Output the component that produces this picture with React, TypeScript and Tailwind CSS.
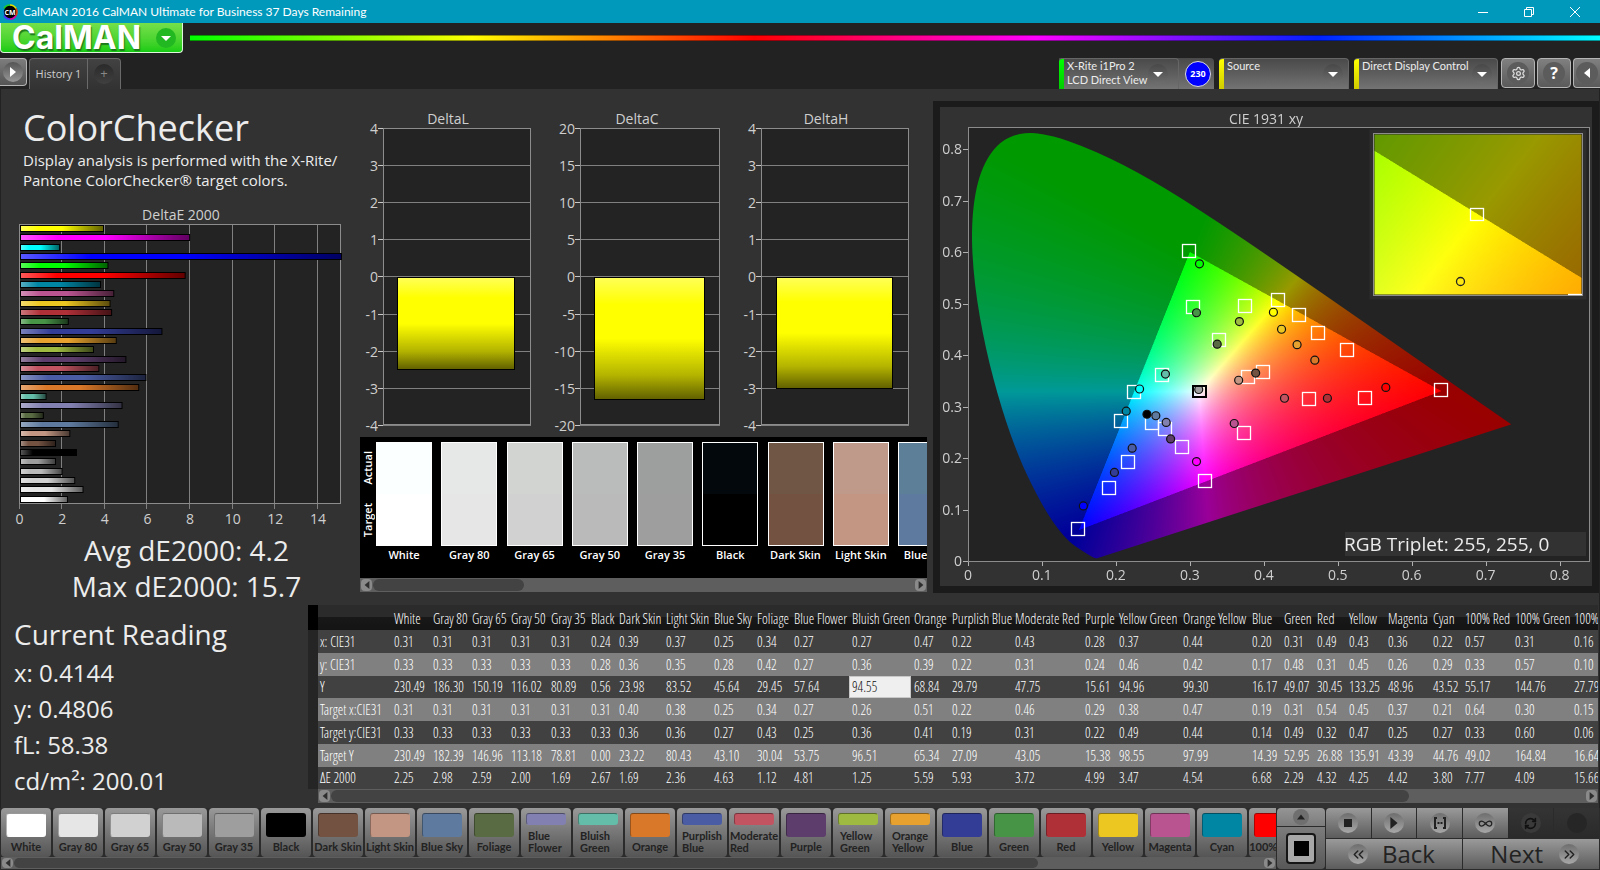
import { useEffect, useRef } from 'react';
import type { ReactNode } from 'react';
import { ChevronsLeft, ChevronsRight, Infinity as InfinityIcon, RefreshCw, Settings } from 'lucide-react';

type Patch = { name: string; color: string; actual?: string };

const PATCHES: Patch[] = [
  { name: 'White', color: '#ffffff', actual: '#fbffff' },
  { name: 'Gray 80', color: '#e6e6e6', actual: '#e5e8e7' },
  { name: 'Gray 65', color: '#d1d1d1', actual: '#d2d4d1' },
  { name: 'Gray 50', color: '#bababa', actual: '#babcbb' },
  { name: 'Gray 35', color: '#9e9e9e', actual: '#9d9f9e' },
  { name: 'Black', color: '#000000', actual: '#02080b' },
  { name: 'Dark Skin', color: '#735242', actual: '#705645' },
  { name: 'Light Skin', color: '#c29682', actual: '#bf9a8b' },
  { name: 'Blue Sky', color: '#5e7a9e', actual: '#5d7f98' },
  { name: 'Foliage', color: '#596b42' },
  { name: 'Blue Flower', color: '#8280b0' },
  { name: 'Bluish Green', color: '#63bda8' },
  { name: 'Orange', color: '#d97829' },
  { name: 'Purplish Blue', color: '#4a5ca3' },
  { name: 'Moderate Red', color: '#c25461' },
  { name: 'Purple', color: '#5c3d6b' },
  { name: 'Yellow Green', color: '#9eba40' },
  { name: 'Orange Yellow', color: '#e6a12e' },
  { name: 'Blue', color: '#333d96' },
  { name: 'Green', color: '#479447' },
  { name: 'Red', color: '#b03038' },
  { name: 'Yellow', color: '#edc721' },
  { name: 'Magenta', color: '#ba5491' },
  { name: 'Cyan', color: '#0085a3' },
  { name: '100% Red', color: '#ff0000' },
];

const DELTA_E: [string, number][] = [
  ['#ffff00', 3.94], ['#ff00ff', 7.98], ['#00ffff', 1.88], ['#0000ff', 15.66], ['#00ff00', 4.15],
  ['#ff0000', 7.77], ['#0085a3', 3.8], ['#ba5491', 4.42], ['#edc721', 4.25], ['#b03038', 4.32],
  ['#479447', 2.29], ['#333d96', 6.68], ['#e6a12e', 4.54], ['#9eba40', 3.47], ['#5c3d6b', 4.99],
  ['#c25461', 3.72], ['#4a5ca3', 5.93], ['#d97829', 5.59], ['#63bda8', 1.25], ['#8280b0', 4.81],
  ['#596b42', 1.12], ['#5e7a9e', 4.63], ['#c29682', 2.36], ['#735242', 1.69], ['#000000', 2.67],
  ['#9e9e9e', 1.69], ['#bababa', 2.0], ['#d1d1d1', 2.59], ['#e6e6e6', 2.98], ['#ffffff', 2.25],
];

const COLUMNS: [string, number][] = [
  ['White', 39], ['Gray 80', 39], ['Gray 65', 39], ['Gray 50', 40], ['Gray 35', 40], ['Black', 28],
  ['Dark Skin', 47], ['Light Skin', 48], ['Blue Sky', 43], ['Foliage', 37], ['Blue Flower', 58],
  ['Bluish Green', 62], ['Orange', 38], ['Purplish Blue', 63], ['Moderate Red', 70], ['Purple', 34],
  ['Yellow Green', 64], ['Orange Yellow', 69], ['Blue', 32], ['Green', 33], ['Red', 32], ['Yellow', 39],
  ['Magenta', 45], ['Cyan', 32], ['100% Red', 50], ['100% Green', 59], ['100% Blue', 60],
];

const ROWS: [string, string][] = [
  ['x: CIE31', '0.31 0.31 0.31 0.31 0.31 0.24 0.39 0.37 0.25 0.34 0.27 0.27 0.47 0.22 0.43 0.28 0.37 0.44 0.20 0.31 0.49 0.43 0.36 0.22 0.57 0.31 0.16'],
  ['y: CIE31', '0.33 0.33 0.33 0.33 0.33 0.28 0.36 0.35 0.28 0.42 0.27 0.36 0.39 0.22 0.31 0.24 0.46 0.42 0.17 0.48 0.31 0.45 0.26 0.29 0.33 0.57 0.10'],
  ['Y', '230.49 186.30 150.19 116.02 80.89 0.56 23.98 83.52 45.64 29.45 57.64 94.55 68.84 29.79 47.75 15.61 94.96 99.30 16.17 49.07 30.45 133.25 48.96 43.52 55.17 144.76 27.79'],
  ['Target x:CIE31', '0.31 0.31 0.31 0.31 0.31 0.31 0.40 0.38 0.25 0.34 0.27 0.26 0.51 0.22 0.46 0.29 0.38 0.47 0.19 0.31 0.54 0.45 0.37 0.21 0.64 0.30 0.15'],
  ['Target y:CIE31', '0.33 0.33 0.33 0.33 0.33 0.33 0.36 0.36 0.27 0.43 0.25 0.36 0.41 0.19 0.31 0.22 0.49 0.44 0.14 0.49 0.32 0.47 0.25 0.27 0.33 0.60 0.06'],
  ['Target Y', '230.49 182.39 146.96 113.18 78.81 0.00 23.22 80.43 43.10 30.04 53.75 96.51 65.34 27.09 43.05 15.38 98.55 97.99 14.39 52.95 26.88 135.91 43.39 44.76 49.02 164.84 16.64'],
  ['ΔE 2000', '2.25 2.98 2.59 2.00 1.69 2.67 1.69 2.36 4.63 1.12 4.81 1.25 5.59 5.93 3.72 4.99 3.47 4.54 6.68 2.29 4.32 4.25 4.42 3.80 7.77 4.09 15.66'],
];

// target chromaticities, x/y
const TARGETS: [number, number][] = [
  [0.299, 0.602], [0.304, 0.493], [0.375, 0.495], [0.339, 0.429], [0.419, 0.507], [0.447, 0.477],
  [0.473, 0.442], [0.513, 0.409], [0.262, 0.362], [0.224, 0.329], [0.207, 0.271], [0.249, 0.267],
  [0.267, 0.256], [0.29, 0.222], [0.216, 0.193], [0.191, 0.141], [0.149, 0.062], [0.32, 0.155],
  [0.373, 0.248], [0.379, 0.358], [0.399, 0.367], [0.461, 0.314], [0.537, 0.317], [0.64, 0.332],
];

const MEASURED: [number, number, string][] = [
  [0.313, 0.577, '#00ff00'], [0.309, 0.482, '#479447'], [0.367, 0.465, '#9eba40'], [0.337, 0.421, '#596b42'],
  [0.413, 0.483, '#ffff00'], [0.424, 0.45, '#edc721'], [0.445, 0.42, '#e6a12e'], [0.469, 0.39, '#d97829'],
  [0.267, 0.363, '#63bda8'], [0.232, 0.334, '#00ffff'], [0.214, 0.291, '#0085a3'], [0.242, 0.285, '#000000'],
  [0.254, 0.282, '#5e7a9e'], [0.268, 0.269, '#8280b0'], [0.274, 0.237, '#5c3d6b'], [0.222, 0.219, '#4a5ca3'],
  [0.198, 0.172, '#333d96'], [0.156, 0.107, '#0000ff'], [0.309, 0.193, '#ff00ff'], [0.36, 0.267, '#ba5491'],
  [0.366, 0.351, '#c29682'], [0.389, 0.365, '#735242'], [0.312, 0.333, '#9e9e9e'], [0.428, 0.316, '#c25461'],
  [0.486, 0.316, '#b03038'], [0.565, 0.337, '#ff0000'],
];

// spectral locus of the CIE 1931 observer
const LOCUS: [number, number][] = [
  [0.1741, 0.005], [0.1714, 0.0051], [0.1644, 0.0109], [0.1566, 0.0177], [0.144, 0.0297], [0.1355, 0.0399],
  [0.1241, 0.0578], [0.1096, 0.0868], [0.0913, 0.1327], [0.0687, 0.2007], [0.0454, 0.295], [0.0235, 0.4127],
  [0.0082, 0.5384], [0.0039, 0.6548], [0.0139, 0.7502], [0.0389, 0.812], [0.0743, 0.8338], [0.1142, 0.8262],
  [0.1547, 0.8059], [0.1929, 0.7816], [0.2296, 0.7543], [0.2658, 0.7243], [0.3016, 0.6923], [0.3731, 0.6245],
  [0.4441, 0.5547], [0.5125, 0.4866], [0.5752, 0.4242], [0.627, 0.3725], [0.6658, 0.334], [0.6915, 0.3083],
  [0.719, 0.2809], [0.7347, 0.2653],
];

const CIE_W = 652;
const CIE_H = 479;
const cieX = (x: number) => 28 + x * 739.5;
const cieY = (y: number) => 454 - y * 515;

function chroma(x: number, y: number) {
  const X = x / y;
  const Z = (1 - x - y) / y;
  const r = 3.2406 * X - 1.5372 - 0.4986 * Z;
  const g = -0.9689 * X + 1.8758 + 0.0415 * Z;
  const b = 0.0557 * X - 0.204 + 1.057 * Z;
  const inside = r >= 0 && g >= 0 && b >= 0;
  const k = (inside ? 255 : 153) / Math.max(r, g, b);
  return [Math.max(0, r) * k, Math.max(0, g) * k, Math.max(0, b) * k];
}

function shade(
  ctx: CanvasRenderingContext2D,
  box: [number, number, number, number],
  range: [number, number, number, number],
) {
  const [left, top, w, h] = box;
  const [x0, x1, y0, y1] = range;
  const img = ctx.createImageData(w, h);
  for (let j = 0; j < h; j++) {
    const y = Math.max(0.0005, y1 - ((y1 - y0) * (j + 0.5)) / h);
    for (let i = 0; i < w; i++) {
      const c = chroma(x0 + ((x1 - x0) * (i + 0.5)) / w, y);
      const o = (j * w + i) * 4;
      img.data[o] = c[0];
      img.data[o + 1] = c[1];
      img.data[o + 2] = c[2];
      img.data[o + 3] = 255;
    }
  }
  ctx.putImageData(img, left, top);
}

function drawDiagram(canvas: HTMLCanvasElement) {
  const ctx = canvas.getContext('2d');
  if (!ctx) return;
  ctx.clearRect(0, 0, canvas.width, canvas.height);
  shade(ctx, [56, 40, 1242, 868], [0, 621 / 739.5, 0, 434 / 515]);

  ctx.globalCompositeOperation = 'destination-in';
  ctx.beginPath();
  const pts = LOCUS.map(([x, y]) => [cieX(x) * 2, cieY(y) * 2]);
  ctx.moveTo(pts[0][0], pts[0][1]);
  for (let i = 1; i < pts.length - 1; i++) {
    ctx.quadraticCurveTo(pts[i][0], pts[i][1], (pts[i][0] + pts[i + 1][0]) / 2, (pts[i][1] + pts[i + 1][1]) / 2);
  }
  ctx.lineTo(pts[pts.length - 1][0], pts[pts.length - 1][1]);
  ctx.closePath();
  ctx.fill();

  ctx.globalCompositeOperation = 'destination-over';
  ctx.fillStyle = '#232323';
  ctx.fillRect(56, 40, 1242, 868);
  ctx.globalCompositeOperation = 'source-over';

  shade(ctx, [867, 53, 418, 323], [0.3893, 0.4493, 0.4753, 0.5353]);
}

function CieDiagram() {
  const ref = useRef<HTMLCanvasElement>(null);
  useEffect(() => {
    if (ref.current) drawDiagram(ref.current);
  }, []);

  const ticks = [0, 1, 2, 3, 4, 5, 6, 7, 8];
  return (
    <div className="grid bg-[#323232]">
      <canvas ref={ref} width={CIE_W * 2} height={CIE_H * 2} className="[grid-area:1/1] w-full" />
      <svg viewBox={`0 0 ${CIE_W} ${CIE_H}`} className="[grid-area:1/1] w-full" fontSize="14" fill="#cfcfcf">
        <text x="326" y="17" textAnchor="middle">CIE 1931 xy</text>
        <rect x="28.5" y="20.5" width="621" height="434" fill="none" stroke="#8c8c8c" />
        {ticks.map(t => (
          <g key={t}>
            <path d={`M${Math.round(cieX(t / 10)) + 0.5} 455v4M23 ${Math.round(cieY(t / 10)) + 0.5}h5`} stroke="#b0b0b0" />
            <text x={cieX(t / 10)} y="473" textAnchor="middle">{t === 0 ? '0' : `0.${t}`}</text>
            <text x="22" y={cieY(t / 10) + 5} textAnchor="end">{t === 0 ? '0' : `0.${t}`}</text>
          </g>
        ))}
        {TARGETS.map(([x, y], i) => (
          <rect key={i} x={Math.round(cieX(x)) - 6.5} y={Math.round(cieY(y)) - 6.5} width="13" height="13" fill="none" stroke="#fff" strokeWidth="1.3" />
        ))}
        {MEASURED.map(([x, y, c], i) => (
          <circle key={i} cx={cieX(x)} cy={cieY(y)} r="4" fill={c} stroke="#111" strokeWidth="1.2" />
        ))}
        <rect x="253" y="279" width="13" height="11" fill="none" stroke="#000" strokeWidth="2" />
        {/* zoomed view round the selected patch */}
        <rect x="432" y="25" width="212" height="165" fill="none" stroke="#2d2d2d" strokeWidth="5" />
        <rect x="433.5" y="26.5" width="209" height="162" fill="none" stroke="#8c8c8c" />
        <rect x="530.5" y="101.5" width="13" height="12" fill="none" stroke="#fff" strokeWidth="1.3" />
        <circle cx="520.5" cy="174.5" r="4" fill="none" stroke="#222" strokeWidth="1.3" />
        <path d="M628 187.5h14" stroke="#fff" strokeWidth="1.3" />
        <rect x="405" y="425" width="241" height="24" fill="#323232" />
        <text x="404" y="444" fontSize="19" fill="#ececec">RGB Triplet: 255, 255, 0</text>
      </svg>
    </div>
  );
}

function DeltaEChart() {
  const sx = (v: number) => 18.5 + v * 21.32;
  return (
    <svg viewBox="0 0 350 330" className="w-[350px] block" fontSize="14" fill="#cfcfcf">
      <defs>
        <linearGradient id="sheen">
          <stop offset="0" stopColor="#fff" stopOpacity="0.35" />
          <stop offset="0.22" stopColor="#fff" stopOpacity="0" />
          <stop offset="0.5" stopColor="#000" stopOpacity="0" />
          <stop offset="1" stopColor="#000" stopOpacity="0.62" />
        </linearGradient>
      </defs>
      <text x="180" y="20" textAnchor="middle">DeltaE 2000</text>
      <rect x="18.5" y="24.5" width="321" height="279" fill="#232323" />
      {[0, 2, 4, 6, 8, 10, 12, 14].map(v => (
        <g key={v}>
          <path d={`M${Math.round(sx(v)) - 0.5} 25v284`} stroke="#808080" />
          <text x={sx(v)} y="324" textAnchor="middle">{v}</text>
        </g>
      ))}
      <rect x="18.5" y="24.5" width="321" height="279" fill="none" stroke="#8c8c8c" />
      {DELTA_E.map(([c, v], i) => {
        const y = Math.round(25 + i * 9.33) + 0.5;
        const w = Math.min(v, 15.1) * 21.32 - 1;
        return (
          <g key={i}>
            <rect x="19.5" y={y} width={w} height="6" fill={c} />
            <rect x="19.5" y={y} width={w} height="6" fill="url(#sheen)" stroke="#000" />
          </g>
        );
      })}
    </svg>
  );
}

const DELTA_PLOTS = [
  { title: 'DeltaL', x: 23, w: 148, step: 1, titleX: 88, barX: 38, barW: 117, bottom: 269 },
  { title: 'DeltaC', x: 220, w: 140, step: 5, titleX: 277, barX: 235, barW: 110, bottom: 299 },
  { title: 'DeltaH', x: 401, w: 148, step: 1, titleX: 466, barX: 417, barW: 116, bottom: 288 },
];

function DeltaCharts() {
  return (
    <svg viewBox="0 0 567 337" className="w-full block" fontSize="14" fill="#cfcfcf">
      <defs>
        <linearGradient id="yellow" x1="0" y1="0" x2="0" y2="1">
          <stop offset="0" stopColor="#ffff58" />
          <stop offset="0.22" stopColor="#ffff00" />
          <stop offset="0.5" stopColor="#ffff00" />
          <stop offset="0.8" stopColor="#b4b400" />
          <stop offset="1" stopColor="#605f00" />
        </linearGradient>
      </defs>
      {DELTA_PLOTS.map(p => (
        <g key={p.title}>
          <text x={p.titleX} y="24" textAnchor="middle">{p.title}</text>
          <rect x={p.x} y="28" width={p.w} height="297" fill="#232323" />
          {[4, 3, 2, 1, 0, -1, -2, -3, -4].map((n, i) => {
            const y = Math.round(28 + i * 37.1) + 0.5;
            return (
              <g key={n}>
                <path d={`M${p.x - 5} ${y}h5`} stroke="#c8c8c8" />
                <path d={`M${p.x} ${y}h${p.w}`} stroke="#808080" />
                <text x={p.x - 5} y={y + 5} textAnchor="end">{n * p.step}</text>
              </g>
            );
          })}
          <rect x={p.x + 0.5} y="28.5" width={p.w - 1} height="296" fill="none" stroke="#8c8c8c" />
          <rect x={p.barX - 0.5} y="177.5" width={p.barW} height={p.bottom - 177} fill="url(#yellow)" stroke="#000" />
        </g>
      ))}
    </svg>
  );
}

function Tri({ dir, className }: { dir: 'left' | 'right' | 'up' | 'down'; className: string }) {
  const points = {
    left: '8,0 8,10 2,5',
    right: '2,0 2,10 8,5',
    up: '0,8 10,8 5,2',
    down: '0,3 10,3 5,8',
  }[dir];
  return (
    <svg viewBox="0 0 10 10" className={className} fill="currentColor">
      <polygon points={points} />
    </svg>
  );
}

function Puck({ children, className }: { children?: ReactNode; className: string }) {
  return <span className={`flex items-center justify-center rounded-full shrink-0 ${className}`}>{children}</span>;
}

function ScrollBar({ thumb, label }: { thumb: string; label: string }) {
  return (
    <div className="flex items-center h-full bg-[#5e5e5e]" role="group" aria-label={label}>
      <button aria-label="Scroll left" className="w-[11px] h-[80%] mx-px rounded-sm bg-[#8a8a8a] text-[#2e2e2e] flex items-center justify-center">
        <Tri dir="left" className="w-2 h-2" />
      </button>
      <div className="flex-1 h-full py-px">
        <div className={`h-full rounded-full bg-[#434343] ${thumb}`} />
      </div>
      <button aria-label="Scroll right" className="w-[11px] h-[80%] mx-px rounded-sm bg-[#8a8a8a] text-[#2e2e2e] flex items-center justify-center">
        <Tri dir="right" className="w-2 h-2" />
      </button>
    </div>
  );
}

function TitleBar() {
  return (
    <div className="h-[23px] bg-[#0099bc] flex items-center text-white pr-[2px]">
      <svg viewBox="0 0 16 16" className="w-4 h-4 ml-[2px] shrink-0">
        <circle cx="8" cy="8" r="7" fill="#000" />
        <path d="M8 1a7 7 0 0 1 6 3.5" stroke="#e0e000" strokeWidth="1.6" fill="none" />
        <path d="M14 4.500a7 7 0 0 1 0 7" stroke="#e04010" strokeWidth="1.6" fill="none" />
        <path d="M14 11.500a7 7 0 0 1-6 3.500" stroke="#e000a0" strokeWidth="1.6" fill="none" />
        <path d="M8 15a7 7 0 0 1-6-3.500" stroke="#5030ff" strokeWidth="1.6" fill="none" />
        <path d="M2 11.500a7 7 0 0 1 0-7" stroke="#0090d0" strokeWidth="1.6" fill="none" />
        <path d="M2 4.500a7 7 0 0 1 6-3.500" stroke="#20d020" strokeWidth="1.6" fill="none" />
        <text x="8" y="10.500" fontSize="7" fontWeight="700" textAnchor="middle" fill="#fff">CM</text>
      </svg>
      <span className="ml-[5px] text-[12px] leading-[23px] flex-1 font-['Lato','Open_Sans',sans-serif]">CalMAN 2016 CalMAN Ultimate for Business 37 Days Remaining</span>
      <button aria-label="Minimize" className="w-[46px] h-full flex items-center justify-center">
        <svg viewBox="0 0 10 10" className="w-[10px] h-[10px]" stroke="#fff"><path d="M0 5.500h10" /></svg>
      </button>
      <button aria-label="Restore" className="w-[46px] h-full flex items-center justify-center">
        <svg viewBox="0 0 10 10" className="w-[10px] h-[10px]" stroke="#fff" fill="none"><path d="M.5 2.500h7v7h-7zM2.500 2.500v-2h7v7h-2" /></svg>
      </button>
      <button aria-label="Close" className="w-[46px] h-full flex items-center justify-center">
        <svg viewBox="0 0 10 10" className="w-[10px] h-[10px]" stroke="#fff"><path d="M0 0l10 10M10 0L0 10" /></svg>
      </button>
    </div>
  );
}

function SourceTab({ accent, className, lines }: { accent: string; className: string; lines: string[] }) {
  return (
    <button className={`h-[31px] flex rounded-t-[4px] overflow-hidden border-t border-r border-[#666] bg-linear-to-b from-[#4a4a4a] to-[#737373] text-left ${className}`}>
      <span className={`w-[5px] h-full shrink-0 ${accent}`} />
      <span className="flex-1 pl-[3px] text-[11px] leading-[14px] text-[#ececec] whitespace-nowrap font-['Lato','Open_Sans',sans-serif]">
        {lines.map(l => <span key={l} className="block">{l}</span>)}
      </span>
      <Puck className="w-5 h-5 mt-[5px] bg-linear-to-b from-[#484848] to-[#6e6e6e] text-white">
        <Tri dir="down" className="w-[10px] h-[10px]" />
      </Puck>
    </button>
  );
}

function Header() {
  return (
    <header className="bg-[#222]">
      <div className="flex h-[35px]">
        <button className="w-[183px] h-[30px] flex items-center justify-between rounded-b-[4px] border border-t-0 border-[#dff5dc] bg-linear-to-b from-[#74e04a] to-[#12cc12] pl-[11px] pr-[6px]">
          <span className="text-white font-bold text-[32px] leading-[28px] font-['Inter','Open_Sans',sans-serif] [text-shadow:1px_2px_1px_#1c7a1c]">CalMAN</span>
          <Puck className="w-5 h-5 bg-[#22b822] text-white">
            <Tri dir="down" className="w-[10px] h-[10px]" />
          </Puck>
        </button>
        <div className="flex-1 ml-[7px] mt-3 h-[6px] border-y border-black/40 bg-[linear-gradient(to_right,#00ff00,#ffff00,#ff0000,#ff00ff,#0020ff,#00ffff)]" />
      </div>
      <div className="flex h-[31px]">
        <button aria-label="Run" className="w-[27px] h-7 flex items-center justify-center rounded-r-[4px] border border-l-0 border-[#b5b5b5] bg-linear-to-b from-[#7d7d7d] to-[#555]">
          <Puck className="w-5 h-5 bg-linear-to-b from-[#555] to-[#999] text-white">
            <Tri dir="right" className="w-[10px] h-[10px]" />
          </Puck>
        </button>
        <div className="ml-[2px] flex rounded-t-[4px] border border-b-0 border-[#6a6a6a] bg-linear-to-b from-[#424242] to-[#323232]">
          <button className="w-[58px] text-[11px] text-[#cfcfcf] border-r border-[#6a6a6a]">History 1</button>
          <button aria-label="Add history" className="w-[32px] flex items-center justify-center">
            <Puck className="w-5 h-5 bg-linear-to-b from-[#2a2a2a] to-[#404040] text-[#888] text-[13px]">+</Puck>
          </button>
        </div>
        <div className="flex-1" />
        <div className="flex mr-[5px] rounded-tr-[4px] bg-linear-to-b from-[#4a4a4a] to-[#737373]">
          <SourceTab accent="bg-linear-to-b from-[#00ff00] to-[#00cc00]" className="w-[120px] pr-[10px]" lines={['X-Rite i1Pro 2', 'LCD Direct View']} />
          <button className="w-[35px] pr-[3px] flex items-center justify-end">
            <Puck className="w-[26px] h-[26px] bg-[#0000ff] border border-[#ddd] text-white text-[9px] font-bold">230</Puck>
          </button>
        </div>
        <div className="flex gap-[5px]">
          <SourceTab accent="bg-linear-to-b from-[#ffff00] to-[#d0cc00]" className="w-[130px] pr-[5px]" lines={['Source']} />
          <SourceTab accent="bg-linear-to-b from-[#ffff00] to-[#d0cc00]" className="w-[144px] pr-[5px]" lines={['Direct Display Control']} />
        </div>
        <div className="flex gap-[2px] pl-[3px] h-[30px]">
          <button aria-label="Settings" className="w-[34px] flex items-center justify-center rounded-[4px] border border-[#b5b5b5] bg-linear-to-b from-[#808080] to-[#5a5a5a]">
            <Puck className="w-[22px] h-[22px] bg-[#5c5c5c] text-[#ddd]"><Settings size={15} /></Puck>
          </button>
          <button aria-label="Help" className="w-[34px] flex items-center justify-center rounded-[4px] border border-[#b5b5b5] bg-linear-to-b from-[#808080] to-[#5a5a5a]">
            <Puck className="w-[22px] h-[22px] bg-[#5c5c5c] text-white text-[16px] font-bold">?</Puck>
          </button>
          <button aria-label="Collapse" className="w-[27px] flex items-center justify-center rounded-l-[4px] border border-r-0 border-[#b5b5b5] bg-linear-to-b from-[#808080] to-[#5a5a5a]">
            <Puck className="w-[22px] h-[22px] bg-[#5c5c5c] text-white"><Tri dir="left" className="w-[10px] h-[10px]" /></Puck>
          </button>
        </div>
      </div>
    </header>
  );
}

function PatchCompare() {
  return (
    <div className="bg-black">
      <div className="flex h-[141px] pt-[5px] overflow-hidden">
        <div className="w-4 shrink-0 h-[104px] flex flex-col-reverse items-center justify-around text-[11px] leading-[16px] font-semibold text-white">
          <span className="[writing-mode:vertical-rl] rotate-180">Target</span>
          <span className="[writing-mode:vertical-rl] rotate-180">Actual</span>
        </div>
        <div className="w-[578px] shrink-0 flex justify-between">
          {PATCHES.slice(0, 9).map(p => (
            <div key={p.name} className="w-14 shrink-0 text-center text-[11px] leading-[18px] font-semibold text-white whitespace-nowrap">
              <div className="h-[104px] border border-white flex flex-col">
                <div className="flex-1" style={{ background: p.actual }} />
                <div className="flex-1" style={{ background: p.color }} />
              </div>
              {p.name}
            </div>
          ))}
        </div>
      </div>
      <div className="h-[14px]"><ScrollBar thumb="w-[28%]" label="Patches" /></div>
    </div>
  );
}

function DataTable() {
  return (
    <div className="flex-1 min-w-0 overflow-hidden mr-px">
      <table className="w-[1323px] table-fixed border-collapse font-['Open_Sans_Condensed_Light','Roboto_Condensed','Open_Sans_Condensed',sans-serif] text-[14px] leading-[20px] text-left text-white whitespace-nowrap">
        <colgroup>
          <col style={{ width: 10 }} />
          <col style={{ width: 73 }} />
          {COLUMNS.map(([name, w]) => <col key={name} style={{ width: w }} />)}
        </colgroup>
        <thead>
          <tr className="h-[25px] bg-linear-to-b from-[#2b2b2b] from-50% via-[#181818] via-50% to-[#141414]">
            <td className="bg-black p-0" />
            <td className="p-0" />
            {COLUMNS.map(([name]) => <th key={name} scope="col" className="p-0 pl-[3px] pt-[2px] font-normal">{name}</th>)}
          </tr>
        </thead>
        <tbody>
          {ROWS.map(([label, values], r) => (
            <tr key={label} className={`${r === 2 || r === 6 ? 'h-[22px]' : 'h-[23px]'} ${r % 2 ? 'bg-[#808080]' : 'bg-[#414141]'}`}>
              <td className="p-0 bg-[#252525]" />
              <th scope="row" className="p-0 pl-[2px] font-normal">{label}</th>
              {values.split(' ').map((v, i) => (
                <td key={i} className={`p-0 pl-[3px] ${r === 2 && i === 11 ? 'bg-[#efefef] text-[#111] outline-1 -outline-offset-1 outline-[#c8c8c8]' : ''}`}>{v}</td>
              ))}
            </tr>
          ))}
        </tbody>
      </table>
      <div className="h-[14px] ml-[10px]"><ScrollBar thumb="w-[86%]" label="Readings" /></div>
    </div>
  );
}

function Transport() {
  const light = 'bg-linear-to-b from-[#9a9a9a] to-[#5c5c5c]';
  const dark = 'bg-linear-to-b from-[#343434] to-[#2a2a2a]';
  const puck = 'w-5 h-5 bg-linear-to-b from-[#6e6e6e] to-[#a8a8a8] text-[#222]';
  return (
    <div className="flex gap-px text-[#222] shrink-0">
      <div className="w-12 flex flex-col gap-px">
        <button aria-label="Expand" className="h-[18px] rounded-t-[4px] bg-linear-to-b from-[#959595] to-[#7c7c7c] flex items-center justify-center">
          <Puck className="w-4 h-4 bg-[#6f6f6f]"><Tri dir="up" className="w-2 h-2" /></Puck>
        </button>
        <button aria-label="Stop pattern" className="flex-1 rounded-b-[4px] bg-linear-to-b from-[#7c7c7c] to-[#585858] flex items-center justify-center">
          <span className="w-[30px] h-[31px] rounded-[4px] border-2 border-[#161616] bg-[#a8a8a8] flex items-center justify-center">
            <span className="w-[15px] h-[15px] bg-black" />
          </span>
        </button>
      </div>
      <div className="w-[273px] flex flex-col gap-px">
        <div className="grid grid-cols-6 gap-px h-[30px]">
          <button aria-label="Stop" className={`flex items-center justify-center rounded-tl-[4px] ${light}`}><Puck className={puck}><span className="w-2 h-2 bg-[#222]" /></Puck></button>
          <button aria-label="Play" className={`flex items-center justify-center ${light}`}><Puck className={puck}><Tri dir="right" className="w-3 h-3" /></Puck></button>
          <button aria-label="Read series" className={`flex items-center justify-center ${light}`}>
            <Puck className={puck}>
              <svg viewBox="0 0 14 12" className="w-[14px] h-3" fill="none" stroke="currentColor" strokeWidth="2"><path d="M4 1H2v10h2M10 1h2v10h-2M4.500 6h2M7.500 6h2" /></svg>
            </Puck>
          </button>
          <button aria-label="Continuous" className={`flex items-center justify-center ${light}`}><Puck className={puck}><InfinityIcon size={15} /></Puck></button>
          <button aria-label="Refresh" className={`flex items-center justify-center ${dark}`}><Puck className="w-5 h-5 bg-[#3a3a3a] text-[#111]"><RefreshCw size={13} strokeWidth={3} /></Puck></button>
          <button aria-label="Record" className={`flex items-center justify-center ${dark}`}><Puck className="w-5 h-5 bg-[#262626]" /></button>
        </div>
        <div className="grid grid-cols-2 gap-px h-[30px] text-[24px] leading-[30px] font-medium">
          <button className={`flex items-center gap-[14px] pl-[22px] ${light}`}><Puck className={puck}><ChevronsLeft size={17} /></Puck>Back</button>
          <button className={`flex items-center justify-end gap-4 pr-5 ${light}`}>Next<Puck className={puck}><ChevronsRight size={17} /></Puck></button>
        </div>
      </div>
    </div>
  );
}

function BottomBar() {
  const twoLine = ['Blue Flower', 'Bluish Green', 'Purplish Blue', 'Moderate Red', 'Yellow Green', 'Orange Yellow'];
  return (
    <footer className="flex gap-px bg-[#2b2b2b] pl-px pr-px pb-px">
      <div className="flex-1 min-w-0">
        <div className="flex gap-[2px] h-[49px] overflow-hidden">
          {PATCHES.map(p => {
            const tall = !twoLine.includes(p.name);
            return (
              <button key={p.name} className="w-[50px] shrink-0 rounded-[4px] px-px pt-[5px] flex flex-col items-center bg-linear-to-b from-[#999] to-[#555] text-[11px] text-[#222] font-bold font-['Lato','Open_Sans',sans-serif]">
                <span
                  className={`w-10 shrink-0 rounded-[3px] border border-t-black/40 border-l-black/30 border-r-transparent border-b-transparent ${tall ? 'h-6' : 'h-3'}`}
                  style={{ background: p.color }}
                />
                <span className={`flex-1 flex items-center text-left leading-[12px] ${tall ? 'whitespace-nowrap' : 'min-w-9 w-min pt-px'}`}>{p.name}</span>
              </button>
            );
          })}
        </div>
        <div className="h-3"><ScrollBar thumb="w-[82%]" label="Patch list" /></div>
      </div>
      <Transport />
    </footer>
  );
}

export default function App() {
  return (
    <div className="min-h-screen flex flex-col bg-[#222] font-['Open_Sans','Noto_Sans',sans-serif] overflow-hidden">
      <TitleBar />
      <Header />
      <main className="flex-1 mx-px bg-[#323232] text-[#ececec]">
        <div className="flex items-start">
          <section className="w-[359px] shrink-0 pt-[17px]">
            <h1 className="pl-[22px] text-[36px] leading-[44px]">ColorChecker</h1>
            <p className="pl-[22px] text-[15px] leading-[20px] whitespace-nowrap">
              Display analysis is performed with the X-Rite/<br />
              Pantone ColorChecker® target colors.
            </p>
            <div className="pt-[10px]"><DeltaEChart /></div>
            <div className="pl-3 pt-[2px] pb-px text-center text-[28px] leading-[36px]">
              <p>Avg dE2000: 4.2</p>
              <p>Max dE2000: 15.7</p>
            </div>
          </section>
          <section className="w-[567px] shrink-0 pt-[11px]">
            <DeltaCharts />
            <PatchCompare />
          </section>
          <section className="flex-1 min-w-0 ml-[6px] mt-3 bg-[#1b1b1b] pt-[6px] px-[7px] pb-[7px]">
            <CieDiagram />
          </section>
        </div>
        <div className="flex items-start">
          <section className="w-[307px] shrink-0 pl-[13px] pt-[11px] text-[24px] leading-[36px]">
            <h2 className="text-[28px] pb-[3px]">Current Reading</h2>
            <p>x: 0.4144</p>
            <p>y: 0.4806</p>
            <p>fL: 58.38</p>
            <p>cd/m²: 200.01</p>
          </section>
          <DataTable />
        </div>
      </main>
      <BottomBar />
    </div>
  );
}
